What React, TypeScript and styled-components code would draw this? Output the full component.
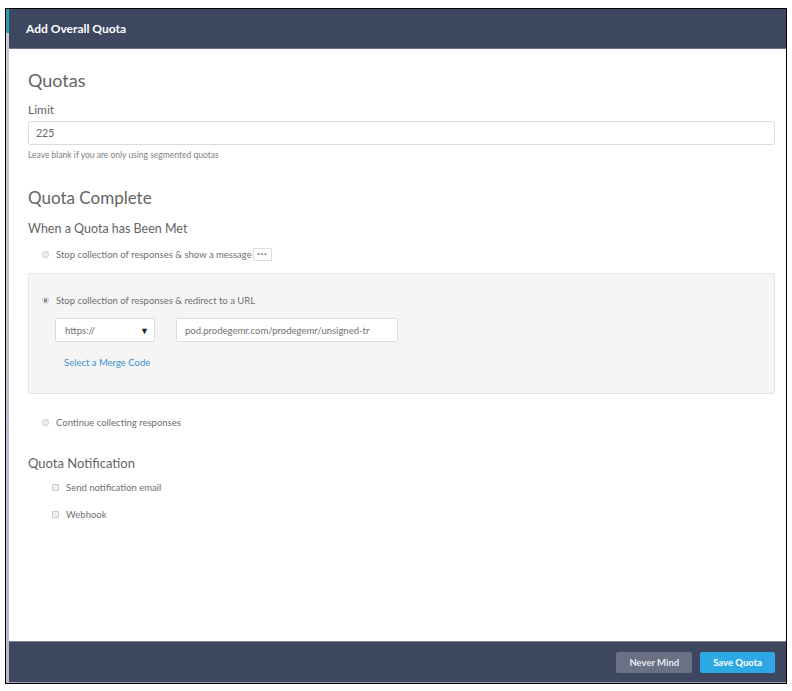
import { useState } from "react"
import styled, { createGlobalStyle } from "styled-components"

const GlobalStyle = createGlobalStyle`
  html, body {
    margin: 0;
    padding: 0;
    background: #fff;
    font-family: Lato, "Open Sans", Arial, sans-serif;
  }
`

function Radio({ checked }: { checked?: boolean }) {
    return <RadioDot $checked={checked} />
}

function App() {
    const [limit, setLimit] = useState("225")
    const [mode, setMode] = useState("redirect")
    const [url, setUrl] = useState("pod.prodegemr.com/prodegemr/unsigned-tr")

    return (
        <>
            <GlobalStyle />
            <Frame>
                <Strip />
                <Dialog>
                    <Header>Add Overall Quota</Header>
                    <Body>
                        <SectionTitle>Quotas</SectionTitle>
                        <Label>Limit</Label>
                        <TextInput value={limit} onChange={(e) => setLimit(e.target.value)} />
                        <Help>Leave blank if you are only using segmented quotas</Help>

                        <SectionTitle $gap={26} $size={17}>Quota Complete</SectionTitle>
                        <SubTitle>When a Quota has Been Met</SubTitle>

                        <OptionRow $top={9} onClick={() => setMode("message")}>
                            <Radio checked={mode === "message"} />
                            Stop collection of responses &amp; show a message
                            <MoreBtn>•••</MoreBtn>
                        </OptionRow>

                        <Well>
                            <OptionRow $top={0} $indent={13} onClick={() => setMode("redirect")}>
                                <Radio checked={mode === "redirect"} />
                                Stop collection of responses &amp; redirect to a URL
                            </OptionRow>
                            <UrlRow>
                                <Select>
                                    https://
                                    <Caret>▼</Caret>
                                </Select>
                                <UrlInput value={url} onChange={(e) => setUrl(e.target.value)} />
                            </UrlRow>
                            <MergeLink href="#">Select a Merge Code</MergeLink>
                        </Well>

                        <OptionRow $top={20} onClick={() => setMode("continue")}>
                            <Radio checked={mode === "continue"} />
                            Continue collecting responses
                        </OptionRow>

                        <NotifyTitle>Quota Notification</NotifyTitle>
                        <CheckRow $top={7}>
                            <Check />
                            Send notification email
                        </CheckRow>
                        <CheckRow $top={11}>
                            <Check />
                            Webhook
                        </CheckRow>
                    </Body>
                    <Footer>
                        <Button $pad={13}>Never Mind</Button>
                        <Button $primary $pad={13}>Save Quota</Button>
                    </Footer>
                </Dialog>
            </Frame>
        </>
    )
}

const Frame = styled.div`
  display: flex;
  margin: 8px 5px 0 5px;
  height: 676px;
  border: 1px solid #000;
  box-sizing: border-box;
  overflow: hidden;
`

const Strip = styled.div`
  width: 3px;
  flex-shrink: 0;
  background: linear-gradient(#2a9db0 0, #2a9db0 24px, #c9cad4 24px, #b9b4c8 100%);
`

const Dialog = styled.div`
  flex: 1;
  display: flex;
  flex-direction: column;
  background: #fff;
`

const Header = styled.div`
  height: 39px;
  display: flex;
  align-items: center;
  padding-left: 17px;
  background: #3d4760;
  border-bottom: 1px solid #6d7488;
  color: #fff;
  font-size: 12px;
  font-weight: 700;
`

const Body = styled.div`
  flex: 1;
  padding: 20px 11px 0 19px;
  color: #666;
`

const SectionTitle = styled.div<{ $gap?: number; $size?: number }>`
  margin-top: ${(p) => p.$gap ?? 0}px;
  font-size: ${(p) => p.$size ?? 18}px;
  line-height: 22px;
  color: #646464;
`

const Label = styled.div`
  margin-top: 11px;
  font-size: 12px;
  line-height: 16px;
  color: #646464;
`

const TextInput = styled.input`
  display: block;
  width: 100%;
  height: 24px;
  margin-top: 3px;
  box-sizing: border-box;
  padding: 0 7px;
  border: 1px solid #dcdcdc;
  border-radius: 3px;
  font-family: inherit;
  font-size: 10.5px;
  color: #666;
  outline: none;
`

const Help = styled.div`
  margin-top: 4px;
  font-size: 8.5px;
  line-height: 12px;
  color: #808080;
`

const SubTitle = styled.div`
  margin-top: 12px;
  font-size: 12.5px;
  line-height: 16px;
  color: #646464;
`

const OptionRow = styled.div<{ $top: number; $indent?: number }>`
  display: flex;
  align-items: center;
  height: 16px;
  margin-top: ${(p) => p.$top}px;
  padding-left: ${(p) => p.$indent ?? 14}px;
  font-size: 9.5px;
  color: #707070;
  cursor: pointer;
`

const RadioDot = styled.span<{ $checked?: boolean }>`
  width: 7px;
  height: 7px;
  margin-right: 7px;
  border-radius: 50%;
  box-sizing: border-box;
  border: 1px solid #c8c8c8;
  background: ${(p) => (p.$checked ? "radial-gradient(#8a8a8a 0, #8a8a8a 1.5px, #e6e6e6 2px)" : "#eee")};
`

const MoreBtn = styled.span`
  display: inline-flex;
  align-items: center;
  justify-content: center;
  width: 19px;
  height: 13px;
  margin-left: 1px;
  box-sizing: border-box;
  border: 1px solid #ddd;
  font-size: 5px;
  letter-spacing: 0.5px;
  color: #888;
`

const Well = styled.div`
  margin-top: 11px;
  height: 121px;
  box-sizing: border-box;
  padding-top: 18px;
  background: #f5f5f5;
  border: 1px solid #e3e3e3;
  border-radius: 2px;
`

const UrlRow = styled.div`
  display: flex;
  gap: 21px;
  margin-top: 10px;
  padding-left: 26px;
`

const Select = styled.div`
  display: flex;
  align-items: center;
  justify-content: space-between;
  width: 100px;
  height: 24px;
  box-sizing: border-box;
  padding: 0 5px 0 9px;
  background: #fff;
  border: 1px solid #dcdcdc;
  border-radius: 2px;
  font-size: 9.5px;
  color: #707070;
`

const Caret = styled.span`
  font-size: 9px;
  color: #222;
`

const UrlInput = styled.input`
  width: 222px;
  height: 24px;
  box-sizing: border-box;
  padding: 0 8px;
  background: #fff;
  border: 1px solid #dcdcdc;
  border-radius: 2px;
  font-family: inherit;
  font-size: 9.5px;
  color: #707070;
  outline: none;
`

const MergeLink = styled.a`
  display: block;
  margin-top: 14px;
  padding-left: 35px;
  font-size: 9.5px;
  line-height: 14px;
  color: #3a8fd0;
  text-decoration: none;
`

const NotifyTitle = styled.div`
  margin-top: 24px;
  font-size: 13px;
  line-height: 18px;
  color: #646464;
`

const CheckRow = styled.div<{ $top: number }>`
  display: flex;
  align-items: center;
  height: 16px;
  margin-top: ${(p) => p.$top}px;
  padding-left: 24px;
  font-size: 9.5px;
  color: #707070;
`

const Check = styled.span`
  width: 7px;
  height: 7px;
  margin-right: 7px;
  box-sizing: border-box;
  border: 1px solid #c8c8c8;
  border-radius: 1px;
  background: #f0f0f0;
`

const Footer = styled.div`
  display: flex;
  justify-content: flex-end;
  align-items: center;
  gap: 8px;
  height: 40px;
  padding-right: 11px;
  background: #3d4760;
  border-top: 1px solid #7c8294;
  border-bottom: 1px solid #9ea3b0;
`

const Button = styled.button<{ $primary?: boolean; $pad: number }>`
  height: 21px;
  padding: 0 ${(p) => p.$pad}px;
  border: none;
  border-radius: 2px;
  background: ${(p) => (p.$primary ? "#2ea8e4" : "#6a7184")};
  color: ${(p) => (p.$primary ? "#fff" : "#e6e8ee")};
  font-family: inherit;
  font-size: 9.5px;
  font-weight: 700;
  cursor: pointer;
`

export default App
